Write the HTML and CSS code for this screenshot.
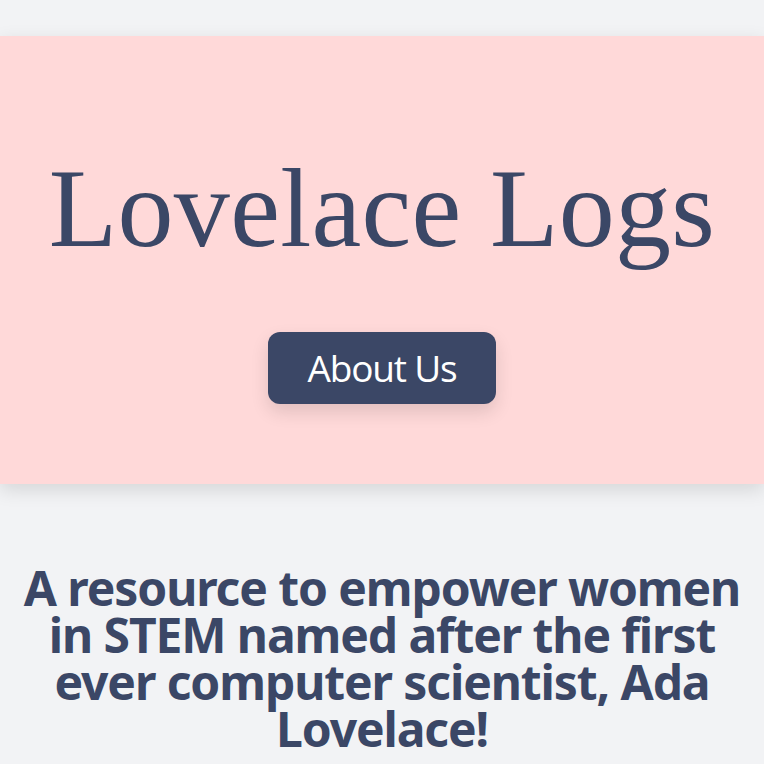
FILE: index.html
```html
<!DOCTYPE html>
<html lang="en">
<head>
<meta charset="utf-8">
<title>Lovelace Logs</title>
<link rel="stylesheet" href="styles.css">
</head>
<body>
<header class="hero">
  <h1 class="hero-title">Lovelace Logs</h1>
  <a class="hero-button" href="#about">About Us</a>
</header>
<main class="intro">
  <h2 class="intro-heading">A resource to empower women in STEM named after the first ever computer scientist, Ada Lovelace!</h2>
</main>
</body>
</html>
```
FILE: styles.css
```css
html, body {
  margin: 0;
  padding: 0;
}
body {
  background: #f2f3f5;
  color: #3b4766;
  font-family: "Open Sans", "Noto Sans", sans-serif;
}
.hero {
  margin-top: 36px;
  background: #ffd9d9;
  height: 448px;
  box-sizing: border-box;
  padding-top: 116px;
  display: flex;
  flex-direction: column;
  align-items: center;
  box-shadow: 0 6px 18px rgba(0, 0, 0, 0.12);
  position: relative;
}
.hero-title {
  margin: 0;
  font-family: "Liberation Serif", "Times New Roman", serif;
  font-weight: 400;
  font-size: 112px;
  line-height: 112px;
  letter-spacing: 0.3px;
  color: #3b4766;
}
.hero-button {
  margin-top: 68px;
  display: inline-block;
  height: 72px;
  line-height: 72px;
  padding: 0 40px;
  border-radius: 12px;
  background: #3b4766;
  color: #ffffff;
  text-decoration: none;
  font-size: 37px;
  letter-spacing: -1.2px;
  box-shadow: 0 8px 18px rgba(0, 0, 0, 0.12);
}
.intro {
  padding: 80px 20px 40px;
}
.intro-heading {
  margin: 0;
  text-align: center;
  font-family: "Noto Sans", sans-serif;
  font-size: 48px;
  line-height: 47px;
  font-weight: 700;
  letter-spacing: -1.1px;
  color: #3b4766;
}
```
